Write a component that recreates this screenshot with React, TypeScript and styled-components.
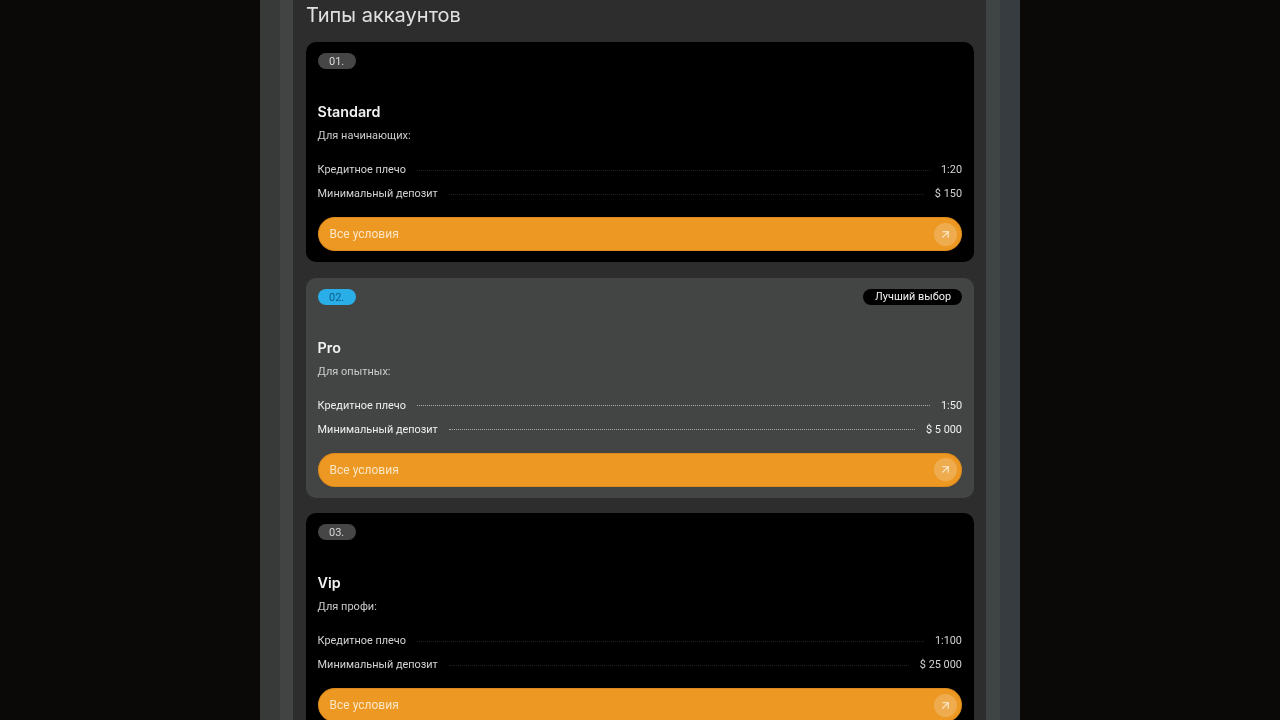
import { FunctionComponent } from "react";
import { ArrowUpRight } from "lucide-react";
import styled, { createGlobalStyle } from "styled-components";

interface Account {
  id: string;
  name: string;
  audience: string;
  leverage: string;
  deposit: string;
  best?: boolean;
}

const accounts: Account[] = [
  { id: "01.", name: "Standard", audience: "Для начинающих:", leverage: "1:20", deposit: "$ 150" },
  { id: "02.", name: "Pro", audience: "Для опытных:", leverage: "1:50", deposit: "$ 5 000", best: true },
  { id: "03.", name: "Vip", audience: "Для профи:", leverage: "1:100", deposit: "$ 25 000" },
];

const AccountCard: FunctionComponent<{ account: Account }> = ({ account }) => (
  <Card $best={account.best}>
    <CardTop>
      <Tag $best={account.best}>{account.id}</Tag>
      {account.best && <BestBadge>Лучший выбор</BestBadge>}
    </CardTop>
    <Name>{account.name}</Name>
    <Audience>{account.audience}</Audience>
    <Rows>
      <Row $best={account.best}>
        <span>Кредитное плечо</span>
        <Dots $best={account.best} />
        <span>{account.leverage}</span>
      </Row>
      <Row $best={account.best}>
        <span>Минимальный депозит</span>
        <Dots $best={account.best} />
        <span>{account.deposit}</span>
      </Row>
    </Rows>
    <MoreButton>
      Все условия
      <ArrowCircle>
        <ArrowUpRight size={13} strokeWidth={2} />
      </ArrowCircle>
    </MoreButton>
  </Card>
);

const App: FunctionComponent = () => (
  <>
    <GlobalStyle />
    <Page>
      <OuterBand>
        <InnerBand>
          <Panel>
            <Heading>Типы аккаунтов</Heading>
            <CardList>
              {accounts.map((account) => (
                <AccountCard key={account.id} account={account} />
              ))}
            </CardList>
          </Panel>
        </InnerBand>
      </OuterBand>
    </Page>
  </>
);

export default App;

const GlobalStyle = createGlobalStyle`
  html, body {
    margin: 0;
    height: 720px;
    overflow: hidden;
    background: #0b0907;
  }
`;

const Page = styled.div`
  display: flex;
  justify-content: center;
  height: 720px;
  overflow: hidden;
  background-color: #0b0907;
  background-image: radial-gradient(#050403 1px, transparent 1.5px);
  background-size: 16px 16px;
  font-family: Roboto, "Liberation Sans", sans-serif;
  filter: blur(0.35px);
`;

const OuterBand = styled.div`
  width: 760px;
  padding: 0 20px;
  box-sizing: border-box;
  background: linear-gradient(90deg, #383a3a 0 50%, #363c3f 50% 100%);
`;

const InnerBand = styled.div`
  padding: 0 14px 0 13px;
  background: linear-gradient(90deg, #424343 0 50%, #3f4445 50% 100%);
`;

const Panel = styled.div`
  padding: 0 12px 0 13px;
  background: #2d2d2d;
`;

const Heading = styled.h2`
  margin: 0;
  height: 42px;
  padding-top: 3px;
  box-sizing: border-box;
  font-family: Inter, sans-serif;
  font-size: 20px;
  font-weight: 400;
  line-height: 24px;
  color: #e0e0e0;
`;

const CardList = styled.div`
  display: flex;
  flex-direction: column;
  gap: 15.7px;
`;

const Card = styled.article<{ $best?: boolean }>`
  height: 220px;
  box-sizing: border-box;
  padding: 11px 12px 11px 11.6px;
  flex: none;
  border-radius: 10px;
  background: ${({ $best }) => ($best ? "#434444" : "#000")};
`;

const CardTop = styled.div`
  display: flex;
  align-items: center;
  justify-content: space-between;
`;

const Tag = styled.span<{ $best?: boolean }>`
  width: 38px;
  height: 16px;
  border-radius: 8px;
  text-align: center;
  font-size: 11px;
  line-height: 17px;
  color: ${({ $best }) => ($best ? "#0d5f8c" : "#d8d8d8")};
  background: ${({ $best }) => ($best ? "#29aee8" : "#464646")};
`;

const BestBadge = styled.span`
  height: 16px;
  padding: 0 11px 0 12px;
  border-radius: 8px;
  font-size: 10.9px;
  line-height: 16px;
  color: #f2f2f2;
  background: #000;
`;

const Name = styled.h3`
  margin: 33px 0 0;
  font-family: Inter, sans-serif;
  font-size: 14.3px;
  font-weight: 600;
  line-height: 20px;
  color: #f2f2f2;
`;

const Audience = styled.p`
  margin: 6px 0 0;
  font-size: 11px;
  line-height: 16px;
  color: #cccccc;
`;

const Rows = styled.div`
  display: flex;
  flex-direction: column;
  gap: 8px;
  margin-top: 18px;
`;

const Row = styled.div<{ $best?: boolean }>`
  display: flex;
  align-items: center;
  gap: 11px;
  font-size: 10.9px;
  line-height: 16px;
  color: ${({ $best }) => ($best ? "#f0f0f0" : "#d4d4d4")};
`;

const Dots = styled.i<{ $best?: boolean }>`
  flex: 1;
  border-bottom: 1px dotted ${({ $best }) => ($best ? "#a8a8a8" : "#222222")};
`;

const MoreButton = styled.button`
  display: flex;
  align-items: center;
  justify-content: space-between;
  width: 100%;
  height: 34px;
  margin-top: 15px;
  padding: 0 5px 0 12px;
  border: 0;
  border-radius: 17px;
  font-family: inherit;
  font-size: 12px;
  color: #fbe6c6;
  background: #ec9822;
  box-shadow: inset 0 0 0 1px rgba(190, 115, 20, 0.35);
`;

const ArrowCircle = styled.span`
  display: flex;
  align-items: center;
  justify-content: center;
  width: 23px;
  height: 23px;
  border-radius: 50%;
  color: #fdeeda;
  background: rgba(255, 255, 255, 0.2);
`;
